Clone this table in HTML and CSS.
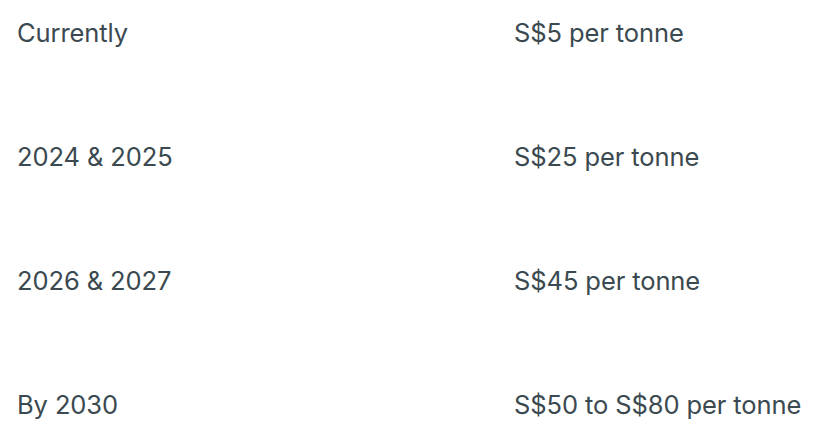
FILE: index.html
```html
<!DOCTYPE html>
<html>
<head>
<meta charset="utf-8">
<link rel="stylesheet" href="styles.css">
</head>
<body>
<div class="table">
  <div class="row"><div class="cell">Currently</div><div class="cell">S$5 per tonne</div></div>
  <div class="row"><div class="cell">2024 &amp; 2025</div><div class="cell">S$25 per tonne</div></div>
  <div class="row"><div class="cell">2026 &amp; 2027</div><div class="cell">S$45 per tonne</div></div>
  <div class="row last"><div class="cell">By 2030</div><div class="cell">S$50 to S$80 per tonne</div></div>
</div>
</body>
</html>
```
FILE: styles.css
```css
html, body {
  margin: 0;
  background: #ffffff;
}
.table {
  padding: 18px 0 0 17px;
  font-family: Inter, "Noto Sans", sans-serif;
  font-size: 25.5px;
  color: #3b4950;
  letter-spacing: -0.1px;
}
.row {
  display: grid;
  grid-template-columns: 497px 1fr;
  height: 124px;
  line-height: 30px;
}
.row.last {
  height: 30px;
}
```
